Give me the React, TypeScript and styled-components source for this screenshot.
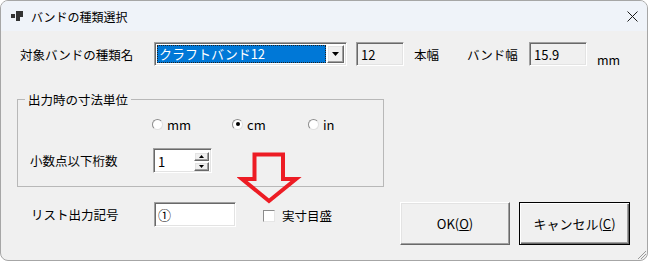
import styled, { createGlobalStyle, css } from 'styled-components';

const GlobalStyle = createGlobalStyle`
  html, body {
    margin: 0;
    padding: 0;
    background: #ffffff;
  }
  body {
    font-family: 'Noto Sans CJK JP', 'Noto Sans', sans-serif;
    font-size: 12.5px;
    color: #000000;
  }
`;

const sunken = css`
  border-style: solid;
  border-width: 1px;
  border-color: #a0a0a0 #ffffff #ffffff #a0a0a0;
  box-shadow: inset 1px 1px 0 #696969, inset -1px -1px 0 #e3e3e3;
  box-sizing: border-box;
`;

const raised = css`
  border-style: solid;
  border-width: 1px;
  border-color: #ffffff #696969 #696969 #ffffff;
  box-shadow: inset -1px -1px 0 #a0a0a0, inset 1px 1px 0 #e3e3e3;
  box-sizing: border-box;
`;

const Window = styled.div`
  position: relative;
  width: 648px;
  height: 261px;
  box-sizing: border-box;
  border: 1px solid #a6a6a6;
  border-radius: 8px;
  overflow: hidden;
  background: #f0f0f0;
  display: flex;
  flex-direction: column;
`;

const TitleBar = styled.div`
  height: 30px;
  flex-shrink: 0;
  background: #eff3f9;
  display: flex;
  align-items: center;
  padding-left: 10px;
`;

const TitleText = styled.span`
  margin-left: 8px;
  font-size: 12px;
  line-height: 15px;
`;

const CloseBox = styled.div`
  margin-left: auto;
  width: 30px;
  height: 30px;
  display: flex;
  align-items: center;
  justify-content: center;
`;

const Body = styled.div`
  display: flex;
  flex-direction: column;
  padding-left: 16px;
`;

const TopRow = styled.div`
  margin-top: 11px;
  height: 24px;
  display: flex;
  align-items: center;
  padding-left: 3px;
`;

const Label = styled.span<{ $w: number }>`
  width: ${(p) => p.$w}px;
  flex-shrink: 0;
  line-height: 15px;
  white-space: nowrap;
`;

const Combo = styled.div`
  ${sunken};
  width: 193px;
  height: 24px;
  background: #ffffff;
  display: flex;
  padding: 2px 2px 2px 2px;
  gap: 1px;
`;

const ComboValue = styled.div`
  flex: 1;
  background: #0078d7;
  color: #ffffff;
  outline: 1px dotted #202020;
  outline-offset: -1px;
  font-size: 13px;
  line-height: 18px;
  padding-left: 2px;
  white-space: nowrap;
`;

const DropButton = styled.div`
  ${raised};
  width: 17px;
  background: #f0f0f0;
  display: flex;
  align-items: center;
  justify-content: center;
`;

const ReadField = styled.div<{ $w: number }>`
  ${sunken};
  width: ${(p) => p.$w}px;
  height: 24px;
  background: #f0f0f0;
  display: flex;
  align-items: center;
  padding-left: 4px;
  font-size: 13px;
`;

const Unit = styled.span`
  align-self: flex-end;
  margin-left: 10px;
  margin-bottom: -1px;
  line-height: 15px;
`;

const Group = styled.fieldset`
  margin: 26px 0 0 0;
  padding: 0;
  min-width: 0;
  width: 367px;
  height: 95px;
  box-sizing: border-box;
  border: 1px solid #b8b8b8;
`;

const Legend = styled.legend`
  margin-left: 7px;
  padding: 0 3px;
  line-height: 15px;
`;

const GroupInner = styled.div`
  display: flex;
  flex-direction: column;
`;

const RadioRow = styled.div`
  margin-top: 9px;
  height: 16px;
  display: flex;
  align-items: center;
  padding-left: 134px;
`;

const RadioItem = styled.label<{ $w: number }>`
  width: ${(p) => p.$w}px;
  display: flex;
  align-items: center;
  gap: 4px;
  line-height: 15px;
  font-size: 13px;
`;

const RadioCircle = styled.span<{ $on?: boolean }>`
  width: 11px;
  height: 11px;
  box-sizing: border-box;
  border-radius: 50%;
  border: 1px solid #8c8c8c;
  border-right-color: #e0e0e0;
  border-bottom-color: #e0e0e0;
  background: #ffffff;
  display: flex;
  align-items: center;
  justify-content: center;
  &::after {
    content: '';
    width: 4px;
    height: 4px;
    border-radius: 50%;
    background: ${(p) => (p.$on ? '#000000' : 'transparent')};
  }
`;

const SpinRow = styled.div`
  margin-top: 16px;
  display: flex;
  align-items: center;
  padding-left: 12px;
`;

const SpinBox = styled.div`
  ${sunken};
  width: 59px;
  height: 25px;
  background: #ffffff;
  display: flex;
  align-items: center;
  padding: 3px 2px 2px 4px;
  font-size: 13px;
`;

const SpinText = styled.span`
  flex: 1;
`;

const SpinButtons = styled.div`
  display: flex;
  flex-direction: column;
  gap: 1px;
  width: 15px;
`;

const SpinButton = styled.div`
  ${raised};
  height: 9px;
  background: #f0f0f0;
  display: flex;
  align-items: center;
  justify-content: center;
`;

const BottomRow = styled.div`
  margin-top: 15px;
  display: flex;
  align-items: flex-start;
  padding-right: 17px;
`;

const FieldGroup = styled.div`
  display: flex;
  align-items: center;
  height: 25px;
  padding-left: 14px;
`;

const InputField = styled.div`
  ${sunken};
  width: 82px;
  height: 25px;
  background: #ffffff;
  display: flex;
  align-items: center;
  padding-left: 3px;
  font-size: 13px;
`;

const CheckLabel = styled.label`
  margin-left: 27px;
  display: flex;
  align-items: center;
  gap: 7px;
  margin-top: 2px;
  line-height: 15px;
`;

const CheckBox = styled.span`
  width: 12px;
  height: 12px;
  box-sizing: border-box;
  border: 1px solid #8c8c8c;
  border-right-color: #e6e6e6;
  border-bottom-color: #e6e6e6;
  background: #ffffff;
`;

const Buttons = styled.div`
  margin-left: auto;
  display: flex;
  gap: 9px;
`;

const Button = styled.button<{ $default?: boolean }>`
  ${raised};
  width: ${(p) => (p.$default ? 111 : 110)}px;
  height: 43px;
  background: #f0f0f0;
  font-family: inherit;
  font-size: 13px;
  color: #000000;
  padding: 0;
  ${(p) =>
    p.$default &&
    css`
      border: 1px solid #000000;
      box-shadow: inset 1px 1px 0 #ffffff, inset -1px -1px 0 #696969, inset -2px -2px 0 #a0a0a0;
    `}
`;

const U = styled.span`
  text-decoration: underline;
`;

const Overlay = styled.svg<{ $x: number; $y: number }>`
  position: absolute;
  left: ${(p) => p.$x}px;
  top: ${(p) => p.$y}px;
  pointer-events: none;
`;

const App = () => {
  return (
    <>
      <GlobalStyle />
      <Window>
        <TitleBar>
          <svg width="12" height="10" viewBox="0 0 12 10">
            <rect x="0" y="3" width="4" height="4" fill="#333" />
            <rect x="5" y="0" width="7" height="6" fill="#333" />
            <rect x="5" y="6" width="4" height="4" fill="#333" />
          </svg>
          <TitleText>バンドの種類選択</TitleText>
          <CloseBox>
            <svg width="11" height="11" viewBox="0 0 11 11">
              <path d="M0.5 0.5 L10.5 10.5 M10.5 0.5 L0.5 10.5" stroke="#1a1a1a" strokeWidth="1" />
            </svg>
          </CloseBox>
        </TitleBar>
        <Body>
          <TopRow>
            <Label $w={134}>対象バンドの種類名</Label>
            <Combo>
              <ComboValue>クラフトバンド12</ComboValue>
              <DropButton>
                <svg width="7" height="4" viewBox="0 0 7 4">
                  <path d="M0 0 H7 L3.5 4 Z" fill="#000" />
                </svg>
              </DropButton>
            </Combo>
            <ReadField $w={48} style={{ marginLeft: 9 }}>12</ReadField>
            <Label $w={53} style={{ marginLeft: 10 }}>本幅</Label>
            <Label $w={62}>バンド幅</Label>
            <ReadField $w={58}>15.9</ReadField>
            <Unit>mm</Unit>
          </TopRow>

          <Group>
            <Legend>出力時の寸法単位</Legend>
            <GroupInner>
              <RadioRow>
                <RadioItem $w={80}>
                  <RadioCircle />
                  mm
                </RadioItem>
                <RadioItem $w={76}>
                  <RadioCircle $on />
                  cm
                </RadioItem>
                <RadioItem $w={40}>
                  <RadioCircle />
                  in
                </RadioItem>
              </RadioRow>
              <SpinRow>
                <Label $w={123}>小数点以下桁数</Label>
                <SpinBox>
                  <SpinText>1</SpinText>
                  <SpinButtons>
                    <SpinButton>
                      <svg width="5" height="3" viewBox="0 0 5 3">
                        <path d="M2.5 0 L5 3 H0 Z" fill="#000" />
                      </svg>
                    </SpinButton>
                    <SpinButton>
                      <svg width="5" height="3" viewBox="0 0 5 3">
                        <path d="M0 0 H5 L2.5 3 Z" fill="#000" />
                      </svg>
                    </SpinButton>
                  </SpinButtons>
                </SpinBox>
              </SpinRow>
            </GroupInner>
          </Group>

          <BottomRow>
            <FieldGroup>
              <Label $w={123}>リスト出力記号</Label>
              <InputField>①</InputField>
              <CheckLabel>
                <CheckBox />
                実寸目盛
              </CheckLabel>
            </FieldGroup>
            <Buttons>
              <Button>
                OK(<U>O</U>)
              </Button>
              <Button $default>
                キャンセル(<U>C</U>)
              </Button>
            </Buttons>
          </BottomRow>
        </Body>

        <Overlay $x={236} $y={148} width="66" height="58" viewBox="0 0 66 58">
          <path
            d="M17.5 5.5 H46 V30 H59 L32 52 L5 30 H17.5 Z"
            fill="none"
            stroke="#ed1c24"
            strokeWidth="4"
            strokeLinejoin="miter"
          />
        </Overlay>
        <Overlay $x={634} $y={247} width="12" height="12" viewBox="0 0 12 12">
          <path d="M11 3 L3 11 M11 6 L6 11 M11 9 L9 11" stroke="#9a9a9a" strokeWidth="1" />
        </Overlay>
      </Window>
    </>
  );
};

export default App;
